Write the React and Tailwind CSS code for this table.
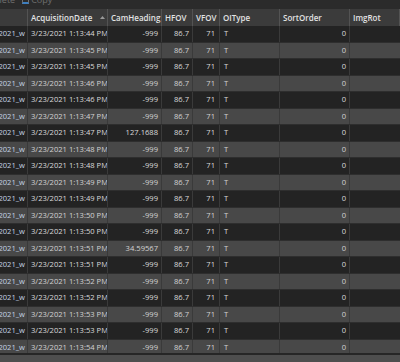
import React from 'react';

const columns = [
  { key: 'oid', label: '', w: 'w-[28px]' },
  { key: 'date', label: 'AcquisitionDate', w: 'w-[80px]', sorted: true },
  { key: 'cam', label: 'CamHeading', w: 'w-[54px]' },
  { key: 'hfov', label: 'HFOV', w: 'w-[31px]' },
  { key: 'vfov', label: 'VFOV', w: 'w-[27px]' },
  { key: 'oitype', label: 'OIType', w: 'w-[60px]' },
  { key: 'sort', label: 'SortOrder', w: 'w-[70px]' },
  { key: 'rot', label: 'ImgRot', w: 'w-[50px]' },
];

const times = [
  '44', '45', '45', '46', '46', '47', '47', '48', '48', '49',
  '49', '50', '50', '51', '51', '52', '52', '53', '53', '54',
];

const headings = { 6: '127.1688', 13: '34.59567' };

const rows = times.map((s, i) => ({
  date: `3/23/2021 1:13:${s} PM`,
  cam: headings[i] || '-999',
}));

const SortArrow = () => (
  <svg width="5" height="3" viewBox="0 0 5 3" className="ml-auto mr-[2px]">
    <path d="M0 3 L2.5 0 L5 3 Z" fill="#9a9a9a" />
  </svg>
);

const Toolbar = () => (
  <div className="h-[9px] shrink-0 overflow-hidden bg-[#2b2b2b]">
    <div className="flex items-center mt-[-8px] h-[16px] text-[9px] text-[#6f6f6f] whitespace-nowrap">
      <span className="ml-[-12px]">Delete</span>
      <span className="ml-[7px] w-[7px] h-[8px] border border-[#6f6f6f] border-b-2 border-b-[#3d7fc0]" />
      <span className="ml-[2px]">Copy</span>
    </div>
  </div>
);

const Header = () => (
  <div className="flex h-[17px] shrink-0 bg-[#3b3b3b] text-[8px] font-semibold text-[#e2e2e2]">
    {columns.map((c) => (
      <div
        key={c.key}
        className={`${c.w} shrink-0 flex items-center pl-[3px] border-r border-[#535353] whitespace-nowrap overflow-hidden`}
      >
        {c.label}
        {c.sorted && <SortArrow />}
      </div>
    ))}
  </div>
);

const Row = ({ row, index }) => {
  const light = index % 2 === 1;
  return (
    <div
      className={`flex h-[16.5px] shrink-0 text-[7.6px] border-b border-[#2e2e2e] ${
        light ? 'bg-[#484848] text-[#d2d2d2]' : 'bg-[#232323] text-[#dadada]'
      }`}
    >
      <div className="w-[28px] shrink-0 flex items-center justify-end pr-[2px] overflow-hidden whitespace-nowrap border-r border-[#3a3a3a] text-[#c3d3e4]">
        pano_2021_w
      </div>
      <div className="w-[80px] shrink-0 flex items-center pl-[3px] whitespace-nowrap overflow-hidden border-r border-[#3a3a3a]">
        {row.date}
      </div>
      <div className="w-[54px] shrink-0 flex items-center justify-end pr-[3px] border-r border-[#3a3a3a]">
        {row.cam}
      </div>
      <div className="w-[31px] shrink-0 flex items-center justify-end pr-[3px] border-r border-[#3a3a3a]">
        86.7
      </div>
      <div className="w-[27px] shrink-0 flex items-center justify-end pr-[4px] border-r border-[#3a3a3a]">
        71
      </div>
      <div className="w-[60px] shrink-0 flex items-center pl-[4px] border-r border-[#3a3a3a]">
        T
      </div>
      <div className="w-[70px] shrink-0 flex items-center justify-end pr-[3px] border-r border-[#3a3a3a]">
        0
      </div>
      <div className="w-[50px] shrink-0" />
    </div>
  );
};

export default function App() {
  return (
    <div
      className="w-[400px] h-[362px] overflow-hidden flex flex-col bg-[#2b2b2b]"
      style={{ fontFamily: '"Open Sans", "Noto Sans", sans-serif' }}
    >
      <Toolbar />
      <Header />
      <div className="flex-1 overflow-hidden flex flex-col">
        {rows.map((r, i) => (
          <Row key={i} row={r} index={i} />
        ))}
      </div>
      <div className="h-[9px] shrink-0 border-t-2 border-[#262626] bg-[#4e4e4e]" />
    </div>
  );
}
